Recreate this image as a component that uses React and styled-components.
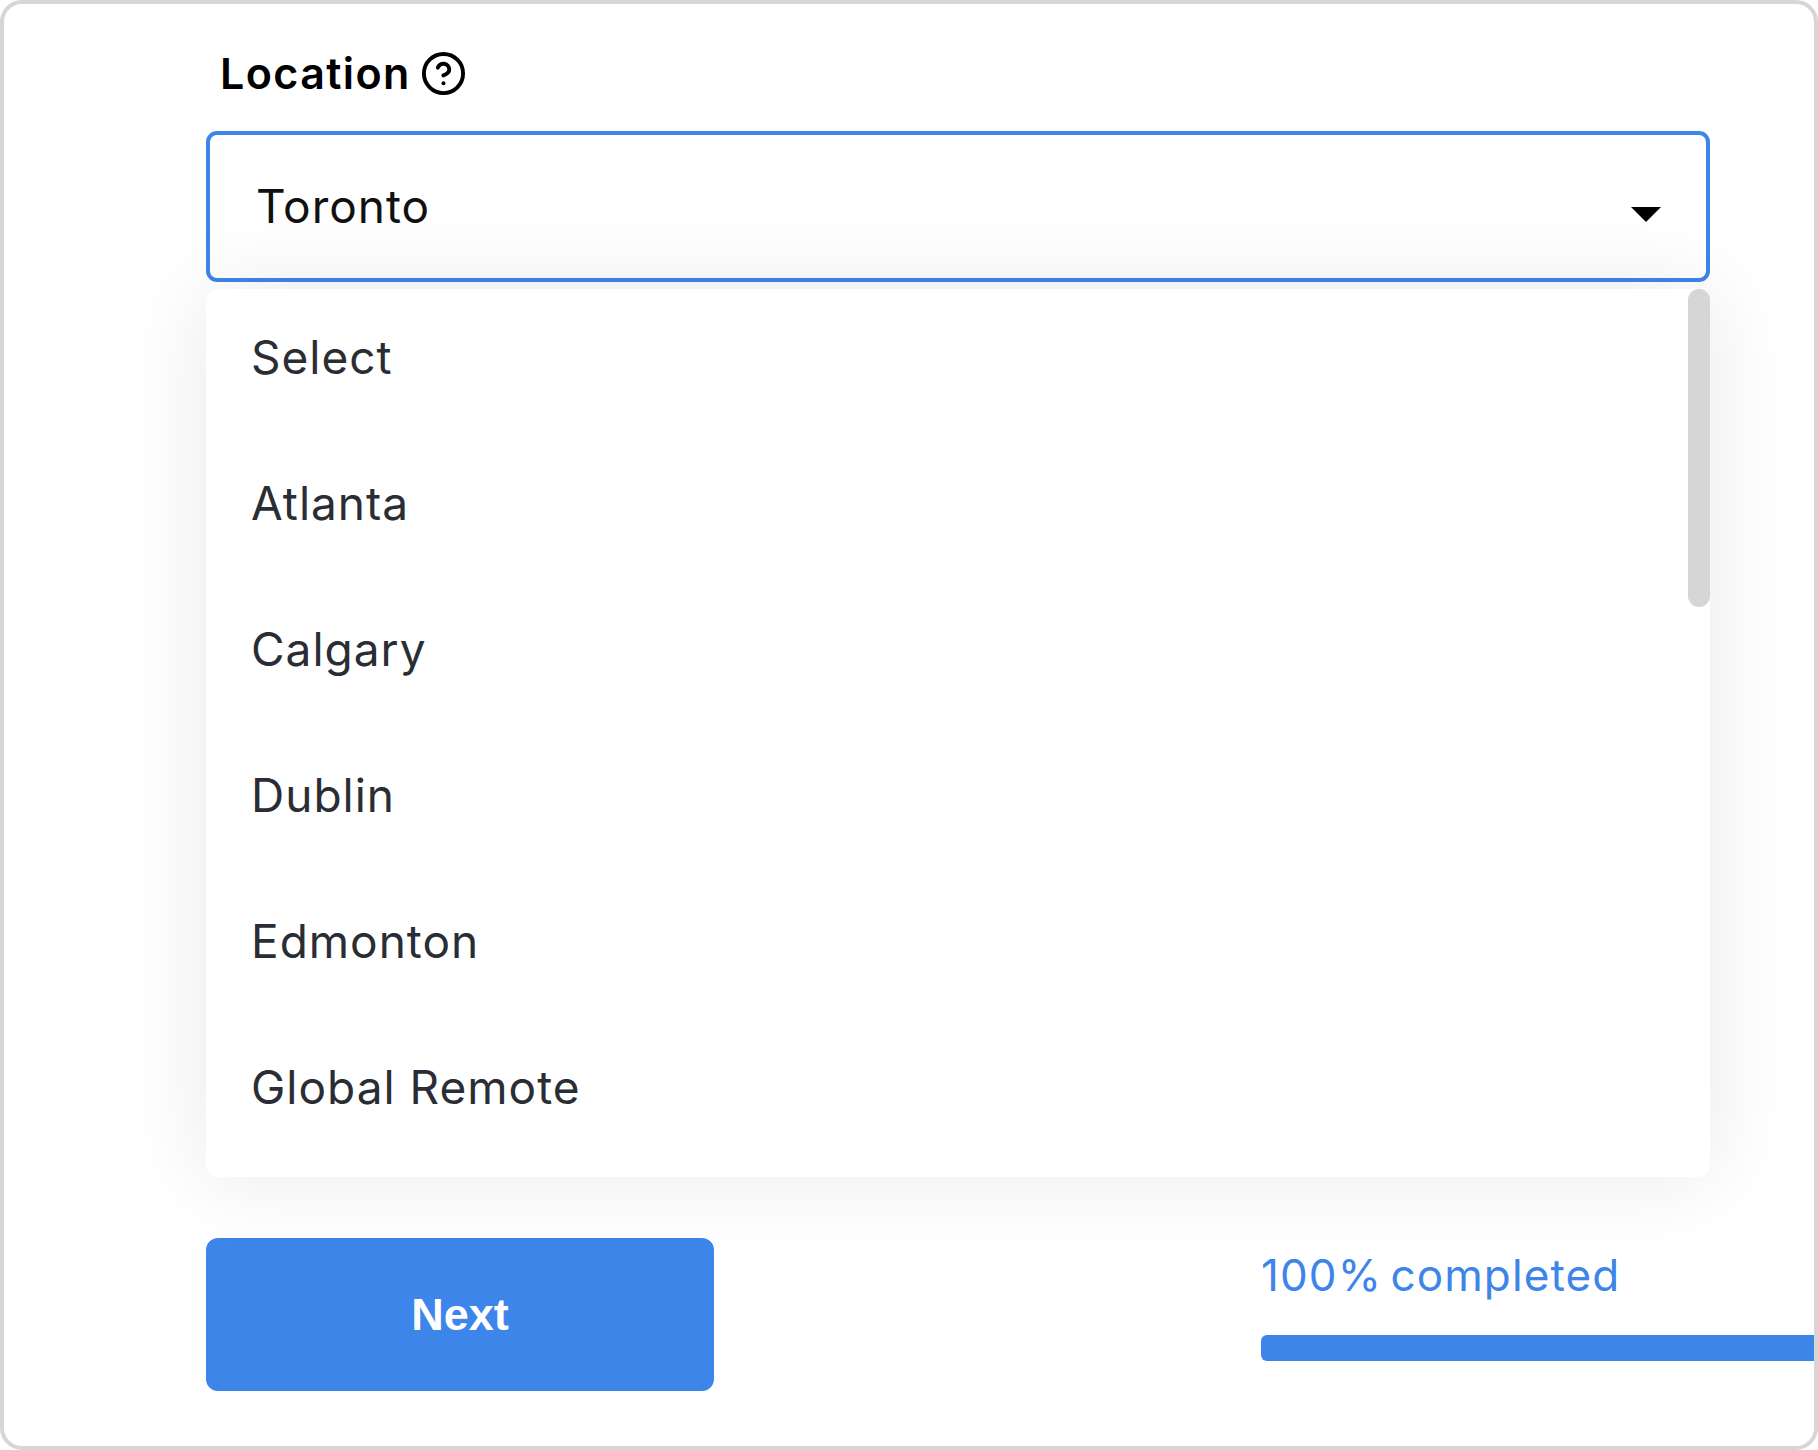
import React from 'react';
import styled, { createGlobalStyle } from 'styled-components';
import { CircleHelp } from 'lucide-react';

const blue = '#3e85ea';
const cities = ['Select', 'Atlanta', 'Calgary', 'Dublin', 'Edmonton', 'Global Remote'];

const GlobalStyle = createGlobalStyle`
  html, body {
    margin: 0;
    background: #fff;
  }
  * {
    box-sizing: border-box;
  }
`;

const Frame = styled.div`
  width: 1818px;
  height: 1450px;
  padding: 44px 0 0 202px;
  border: 4px solid #d6d6d6;
  border-radius: 22px;
  background: #fff;
  overflow: hidden;
  font-family: Inter, "Liberation Sans", sans-serif;
`;

const Form = styled.div`
  width: 1504px;
`;

const Label = styled.div`
  display: flex;
  align-items: center;
  gap: 9px;
  height: 50px;
  padding-left: 14px;
  font-size: 43px;
  font-weight: 600;
  letter-spacing: 1.4px;
  color: #000;
`;

const Select = styled.div`
  display: flex;
  align-items: center;
  justify-content: space-between;
  height: 151px;
  margin-top: 33px;
  padding: 0 45px 2px 46px;
  border: 4px solid ${blue};
  border-radius: 11px;
  font-size: 46px;
  letter-spacing: 1px;
  color: #111;
`;

const Caret = styled.span`
  width: 0;
  height: 0;
  margin-top: 18px;
  border-style: solid;
  border-width: 15px 15px 0;
  border-color: #000 transparent transparent;
`;

const Menu = styled.div`
  position: relative;
  height: 888px;
  margin-top: 7px;
  border-radius: 12px;
  background: #fff;
  box-shadow: 0 0 90px rgba(0, 0, 0, 0.09);
`;

const Option = styled.div`
  display: flex;
  align-items: center;
  height: 146px;
  padding: 0 0 10px 45px;
  font-size: 46px;
  letter-spacing: 1px;
  color: #2a2d34;
`;

const Thumb = styled.div`
  position: absolute;
  top: 0;
  right: 0;
  width: 22px;
  height: 318px;
  border-radius: 11px;
  background: #d6d6d6;
`;

const Footer = styled.div`
  display: flex;
  align-items: flex-start;
  margin-top: 61px;
`;

const NextButton = styled.button`
  flex: none;
  width: 508px;
  height: 153px;
  border: none;
  border-radius: 12px;
  background: ${blue};
  color: #fff;
  font-family: "Liberation Sans", Arial, sans-serif;
  font-size: 45px;
  font-weight: 700;
`;

const Progress = styled.div`
  flex: 1;
  margin-left: 547px;
  padding-top: 12px;
`;

const ProgressText = styled.div`
  height: 50px;
  font-size: 44px;
  letter-spacing: 1.1px;
  word-spacing: -5px;
  line-height: 50px;
  color: ${blue};
`;

const ProgressBar = styled.div`
  height: 26px;
  margin-top: 35px;
  border-radius: 6px 0 0 6px;
  background: ${blue};
`;

export default function App() {
  return (
    <>
      <GlobalStyle />
      <Frame>
        <Form>
          <Label>
            Location
            <CircleHelp size={47} strokeWidth={2} color="#000" />
          </Label>
          <Select>
            Toronto
            <Caret />
          </Select>
          <Menu>
            {cities.map((city) => (
              <Option key={city}>{city}</Option>
            ))}
            <Thumb />
          </Menu>
        </Form>
        <Footer>
          <NextButton>Next</NextButton>
          <Progress>
            <ProgressText>100% completed</ProgressText>
            <ProgressBar />
          </Progress>
        </Footer>
      </Frame>
    </>
  );
}
